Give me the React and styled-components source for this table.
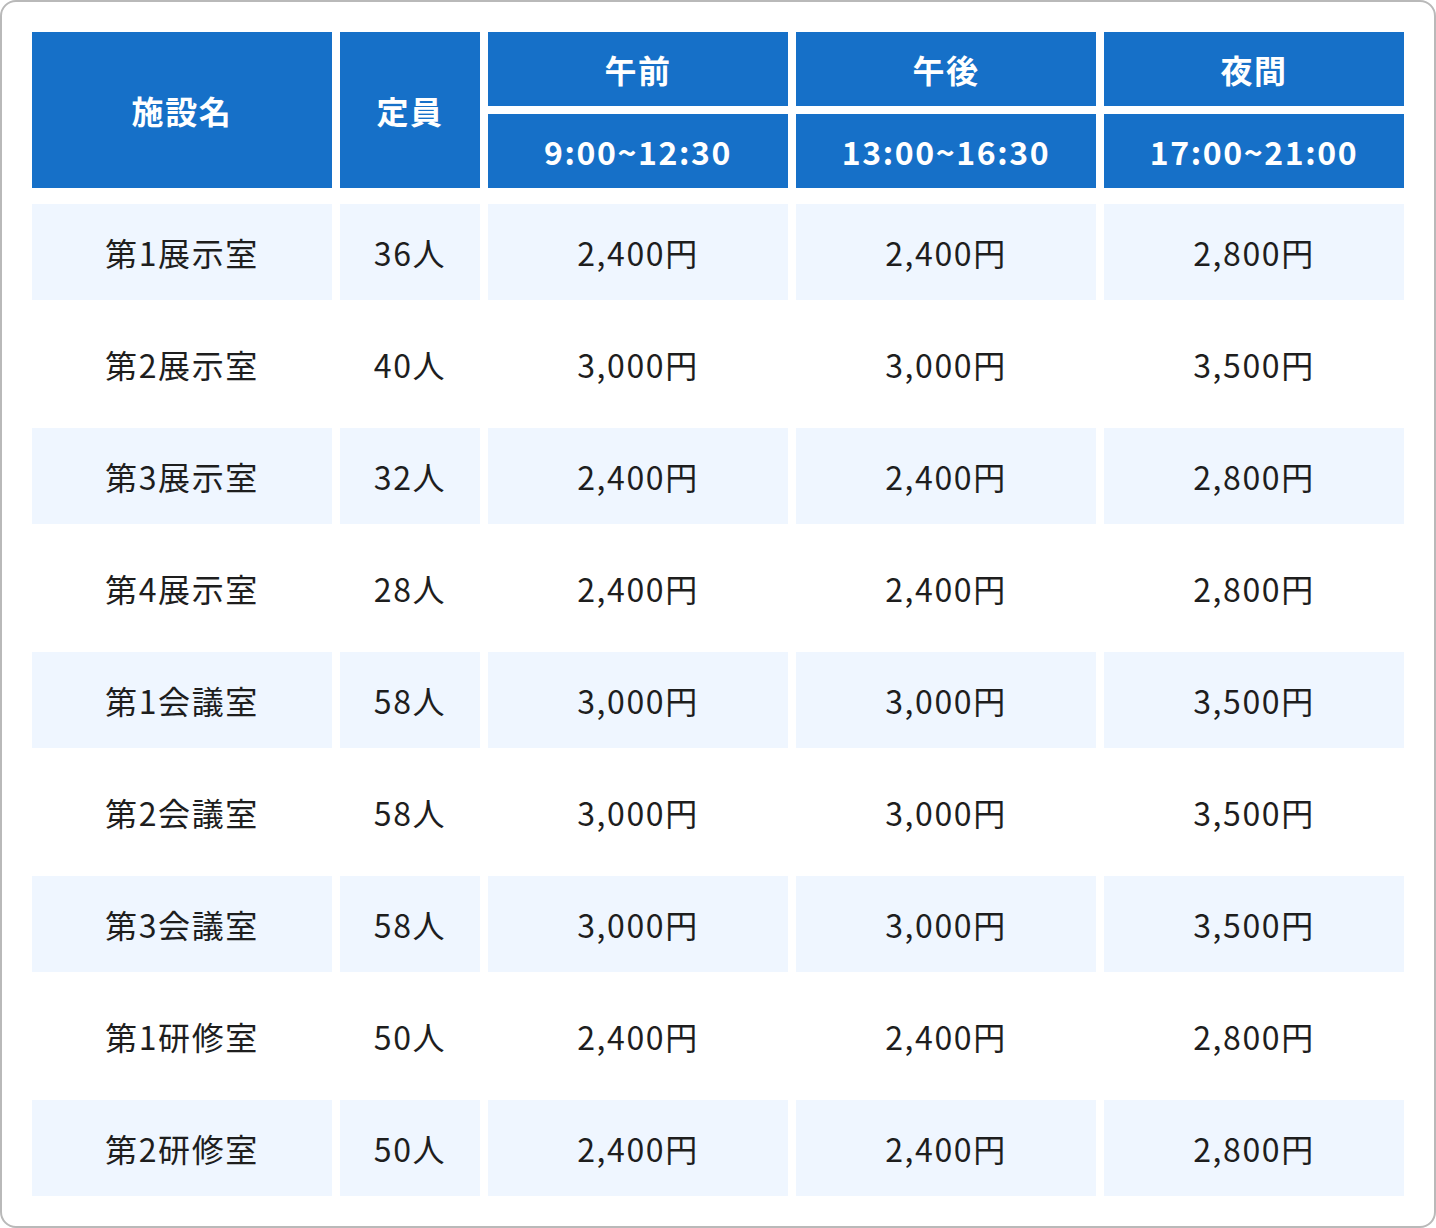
import React from "react";
import styled, { createGlobalStyle } from "styled-components";

const GlobalStyle = createGlobalStyle`
  html, body { margin: 0; padding: 0; background: #fff; }
  body { font-family: "Noto Sans CJK JP", "Noto Sans", sans-serif; }
`;

const rows = [
  ["第1展示室", "36人", "2,400円", "2,400円", "2,800円"],
  ["第2展示室", "40人", "3,000円", "3,000円", "3,500円"],
  ["第3展示室", "32人", "2,400円", "2,400円", "2,800円"],
  ["第4展示室", "28人", "2,400円", "2,400円", "2,800円"],
  ["第1会議室", "58人", "3,000円", "3,000円", "3,500円"],
  ["第2会議室", "58人", "3,000円", "3,000円", "3,500円"],
  ["第3会議室", "58人", "3,000円", "3,000円", "3,500円"],
  ["第1研修室", "50人", "2,400円", "2,400円", "2,800円"],
  ["第2研修室", "50人", "2,400円", "2,400円", "2,800円"],
];

const periods = [
  ["午前", "9:00~12:30"],
  ["午後", "13:00~16:30"],
  ["夜間", "17:00~21:00"],
];

export default function App() {
  return (
    <>
      <GlobalStyle />
      <Card>
        <Head>
          <HeadCell>施設名</HeadCell>
          <HeadCell>定員</HeadCell>
          {periods.map(([name]) => (
            <HeadCell key={name}>{name}</HeadCell>
          ))}
          {periods.map(([name, time]) => (
            <HeadCell key={time}>{time}</HeadCell>
          ))}
        </Head>
        <Body>
          {rows.map((row, i) => (
            <Row key={row[0]}>
              {row.map((v, j) => (
                <Cell key={j} $shaded={i % 2 === 0}>{v}</Cell>
              ))}
            </Row>
          ))}
        </Body>
      </Card>
    </>
  );
}

const cols = "300px 140px 300px 300px 300px";

const Card = styled.div`
  box-sizing: border-box;
  width: 1436px;
  height: 1228px;
  border: 2px solid #b9b9b9;
  border-radius: 16px;
  padding: 30px;
  display: flex;
  flex-direction: column;
  gap: 16px;
`;

const Head = styled.div`
  display: grid;
  grid-template-columns: ${cols};
  grid-template-rows: 74px 74px;
  gap: 8px;
  & > :nth-child(1) { grid-column: 1; grid-row: 1 / 3; }
  & > :nth-child(2) { grid-column: 2; grid-row: 1 / 3; }
`;

const HeadCell = styled.div`
  background: #1670c8;
  color: #fff;
  font-weight: 700;
  font-size: 32px;
  letter-spacing: 0.05em;
  display: flex;
  align-items: center;
  justify-content: center;
`;

const Body = styled.div`
  display: flex;
  flex-direction: column;
  gap: 16px;
`;

const Row = styled.div`
  display: grid;
  grid-template-columns: ${cols};
  column-gap: 8px;
  height: 96px;
`;

const Cell = styled.div`
  background: ${(p) => (p.$shaded ? "#eff6ff" : "transparent")};
  color: #1e1e1e;
  font-size: 32px;
  letter-spacing: 0.05em;
  display: flex;
  align-items: center;
  justify-content: center;
`;
